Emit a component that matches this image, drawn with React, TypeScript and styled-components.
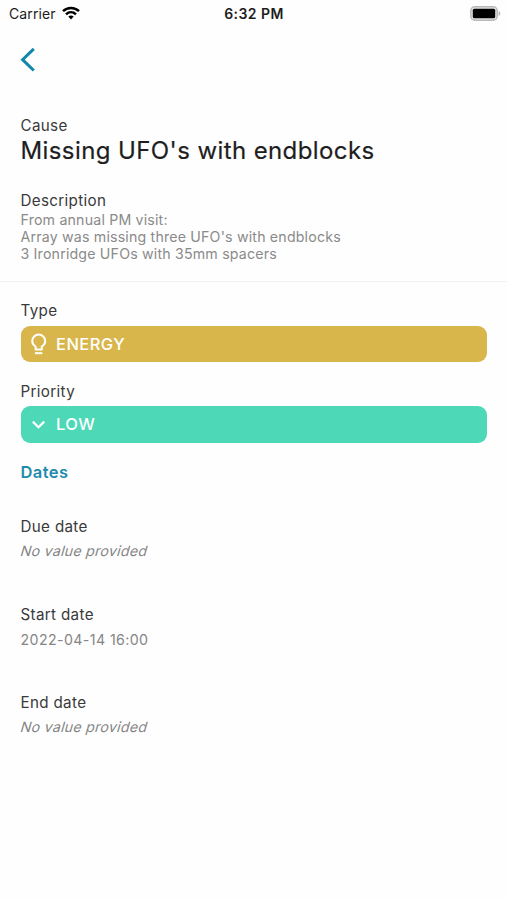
import React from "react";
import styled, { createGlobalStyle } from "styled-components";

const GlobalStyle = createGlobalStyle`
  * { box-sizing: border-box; }
  body {
    margin: 0;
    background: #fefefe;
    font-family: Inter, "Liberation Sans", sans-serif;
    color: #3a3a3a;
  }
`;

const Screen = styled.main`
  width: 100%;
  height: 900px;
  overflow: hidden;
  display: flex;
  flex-direction: column;
`;

const StatusBar = styled.header`
  height: 28px;
  padding: 0 6px 2px 9px;
  display: grid;
  grid-template-columns: 1fr auto 1fr;
  align-items: center;
  font-size: 14px;
  color: #1c1c1c;
`;

const Carrier = styled.div`
  display: flex;
  align-items: center;
  gap: 6px;
  letter-spacing: 0.12px;
  svg { margin-top: -1px; }
`;

const Clock = styled.time`
  font-weight: 600;
  letter-spacing: 0.45px;
  margin-right: 2px;
`;

const Battery = styled.div`
  display: flex;
  justify-content: flex-end;
`;

const NavBar = styled.nav`
  height: 64px;
  padding-left: 20px;
  display: flex;
  align-items: center;
`;

const BackButton = styled.button`
  display: flex;
  padding: 0;
  border: 0;
  background: none;
`;

const Summary = styled.section`
  height: 190px;
  padding: 24px 20.5px 0;
  border-bottom: 1px solid #f2f2f3;
`;

const Details = styled.section`
  padding: 19px 20px 0 20.5px;
`;

const Label = styled.div`
  font-size: 15.2px;
  line-height: 20px;
  letter-spacing: 0.33px;
`;

const Title = styled.h1`
  margin: 0 0 25px;
  font-size: 24px;
  font-weight: 400;
  line-height: 30px;
  letter-spacing: 0.4px;
  color: #1e1e1e;
  -webkit-text-stroke: 0.2px #1e1e1e;
`;

const Description = styled.p`
  margin: 0;
  font-size: 14.2px;
  line-height: 17.2px;
  letter-spacing: 0.18px;
  color: #8a8a8a;
`;

const Pill = styled.div<{ $color: string }>`
  height: 36.5px;
  margin: 4.5px 0 19.5px;
  padding-left: 7.5px;
  border-radius: 9px;
  display: flex;
  align-items: center;
  gap: 7px;
  background: ${(p) => p.$color};
  color: #fff;
  font-size: 16.5px;
  font-weight: 500;
  letter-spacing: 0.45px;
`;

const SectionTitle = styled.h2`
  margin: 0 0 34.5px;
  font-size: 16.5px;
  font-weight: 600;
  line-height: 20px;
  letter-spacing: 0.4px;
  color: #1f8cad;
`;

const Field = styled.div`
  height: 88px;
`;

const Value = styled.div<{ $empty?: boolean }>`
  margin-top: ${(p) => (p.$empty ? "4px" : "5px")};
  font-size: 14.2px;
  line-height: 20px;
  letter-spacing: ${(p) => (p.$empty ? "0.26px" : "0.4px")};
  transform: ${(p) => (p.$empty ? "skewX(-16deg)" : "none")};
  color: #858585;
`;

const WifiIcon = () => (
  <svg width="18" height="14" viewBox="0 0 18 14" fill="none" stroke="#000" strokeWidth="2.5">
    <path d="M1 5.1C5.4.8 12.6.8 17 5.1" />
    <path d="M4 8.3c2.9-2.8 7.1-2.8 10 0" />
    <path d="M6.3 10.6c1.6-1.4 3.8-1.4 5.4 0L9 13.4z" fill="#000" stroke="none" />
  </svg>
);

const BatteryIcon = () => (
  <svg width="31" height="15" viewBox="0 0 31 15">
    <rect x="0.8" y="0.8" width="26.4" height="13.4" rx="4" fill="#e4e4e4" stroke="#b9b9b9" strokeWidth="1.5" />
    <rect x="2.8" y="2.8" width="22.4" height="9.4" rx="1.5" fill="#000" />
    <path d="M28.6 5v5c2.3-.8 2.3-4.2 0-5z" fill="#b5b5b5" />
  </svg>
);

const BackIcon = () => (
  <svg width="16" height="26" viewBox="0 0 16 26" fill="none" stroke="#1287aa" strokeWidth="3">
    <path d="M13.8 1.9 2.6 12.7l11.2 10.8" />
  </svg>
);

const BulbIcon = () => (
  <svg width="21" height="24" viewBox="0 0 21 24" fill="none" stroke="#fff" strokeWidth="2">
    <path d="M7.6 17.4v-2.9C5.5 13.3 4.2 11.4 4.2 9.1a6.5 6.5 0 0 1 13 0c0 2.3-1.3 4.2-3.4 5.4v2.9z" strokeLinejoin="round" />
    <path d="M7 21.2h7.3" />
  </svg>
);

const DownIcon = () => (
  <svg width="21" height="24" viewBox="0 0 21 24" fill="none" stroke="#fff" strokeWidth="2.2">
    <path d="m4.8 9.6 5.7 5.7 5.7-5.7" />
  </svg>
);

const dates = [
  { label: "Due date" },
  { label: "Start date", value: "2022-04-14 16:00" },
  { label: "End date" },
];

export default function App() {
  return (
    <>
      <GlobalStyle />
      <Screen>
        <StatusBar>
          <Carrier>Carrier <WifiIcon /></Carrier>
          <Clock>6:32 PM</Clock>
          <Battery><BatteryIcon /></Battery>
        </StatusBar>
        <NavBar>
          <BackButton aria-label="Back"><BackIcon /></BackButton>
        </NavBar>
        <Summary>
          <Label>Cause</Label>
          <Title>Missing UFO's with endblocks</Title>
          <Label>Description</Label>
          <Description>
            From annual PM visit:<br />
            Array was missing three UFO's with endblocks<br />
            3 Ironridge UFOs with 35mm spacers
          </Description>
        </Summary>
        <Details>
          <Label>Type</Label>
          <Pill $color="#d8b64b"><BulbIcon />ENERGY</Pill>
          <Label>Priority</Label>
          <Pill $color="#4dd9b8"><DownIcon />LOW</Pill>
          <SectionTitle>Dates</SectionTitle>
          {dates.map((d) => (
            <Field key={d.label}>
              <Label>{d.label}</Label>
              <Value $empty={!d.value}>{d.value ?? "No value provided"}</Value>
            </Field>
          ))}
        </Details>
      </Screen>
    </>
  );
}
